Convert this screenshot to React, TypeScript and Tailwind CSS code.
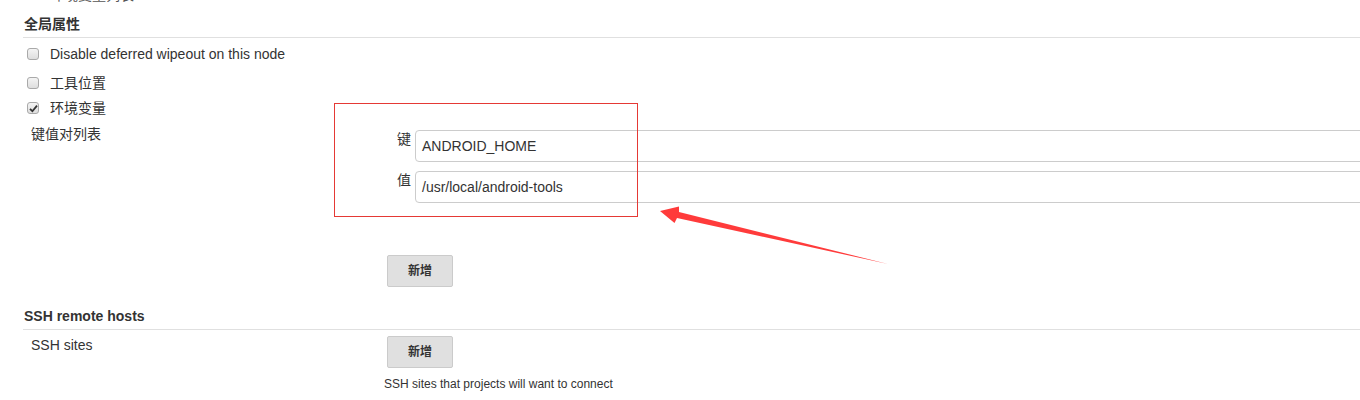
import React from "react";

const font = {
  fontFamily: '"Liberation Sans", Arial, "Noto Sans CJK SC", sans-serif',
};

function Checkbox({ checked }: { checked?: boolean }) {
  return (
    <div className="w-[12px] h-[12px] rounded-[3px] border border-[#a9a9a9] bg-gradient-to-b from-[#f4f4f4] to-[#dedede] flex items-center justify-center shrink-0">
      {checked && (
        <svg width="9" height="9" viewBox="0 0 9 9">
          <path d="M1 4.8 L3.4 7.2 L8 1.6" stroke="#333" strokeWidth="1.8" fill="none" />
        </svg>
      )}
    </div>
  );
}

function CheckRow({ label, checked, mt }: { label: string; checked?: boolean; mt: string }) {
  return (
    <div className={`flex items-center h-[20px] pl-[27px] ${mt}`}>
      <Checkbox checked={checked} />
      <span className="ml-[11px] leading-[20px]">{label}</span>
    </div>
  );
}

function Btn() {
  return (
    <div className="w-[66px] h-[32px] bg-[#e0e0e0] border border-[#cbcbcb] rounded-[2px] flex items-center justify-center text-[12px] font-bold text-[#333]">
      新增
    </div>
  );
}

export default function App() {
  return (
    <div
      className="relative w-[1360px] h-[400px] overflow-hidden bg-white text-[#333] text-[14px]"
      style={font}
    >
      <div className="h-[4px] overflow-hidden flex items-end pl-[50px]">
        <span className="leading-[20px] text-[#555] translate-y-[1px]">环境变量列表</span>
      </div>

      <div className="mt-[10px] ml-[23px] pl-[1px] pb-[3px] border-b border-[#e0e0e0] font-bold leading-[20px]">
        全局属性
      </div>

      <CheckRow label="Disable deferred wipeout on this node" mt="mt-[6px]" />
      <CheckRow label="工具位置" mt="mt-[9px]" />
      <CheckRow label="环境变量" checked mt="mt-[5px]" />

      <div className="flex mt-[6px]">
        <div className="w-[384px] pl-[31px] leading-[20px] shrink-0">键值对列表</div>
        <div className="flex flex-col pt-[6px]">
          <div className="flex items-start">
            <div className="w-[27px] text-right leading-[18px]">键</div>
            <div className="ml-[4px] w-[960px] h-[32px] border border-[#ccc] rounded-[4px] pl-[6px] flex items-center leading-[20px] shrink-0">
              ANDROID_HOME
            </div>
          </div>
          <div className="flex items-start mt-[9px]">
            <div className="w-[27px] text-right leading-[18px]">值</div>
            <div className="ml-[4px] w-[960px] h-[32px] border border-[#ccc] rounded-[4px] pl-[6px] flex items-center leading-[20px] shrink-0">
              /usr/local/android-tools
            </div>
          </div>
          <div className="mt-[52px] ml-[3px]">
            <Btn />
          </div>
        </div>
      </div>

      <div className="mt-[19px] ml-[23px] pl-[1px] pb-[3px] border-b border-[#e0e0e0] font-bold leading-[20px]">
        SSH remote hosts
      </div>

      <div className="flex mt-[5px]">
        <div className="w-[384px] pl-[31px] leading-[20px] shrink-0">SSH sites</div>
        <div className="flex flex-col">
          <div className="mt-[1px] ml-[3px]">
            <Btn />
          </div>
          <div className="mt-[8px] text-[12px] leading-[16px]">
            SSH sites that projects will want to connect
          </div>
        </div>
      </div>

      {/* annotation box */}
      <div className="absolute left-[334px] top-[103px] w-[304px] h-[114px] border border-[#e53935] pointer-events-none" />
      {/* annotation arrow */}
      <svg className="absolute left-0 top-0 pointer-events-none" width="1360" height="400">
        <polygon
          points="660,211 679,206.5 679,212 888,264 677,218 674.5,223"
          fill="#ff3b3b"
        />
      </svg>
    </div>
  );
}
